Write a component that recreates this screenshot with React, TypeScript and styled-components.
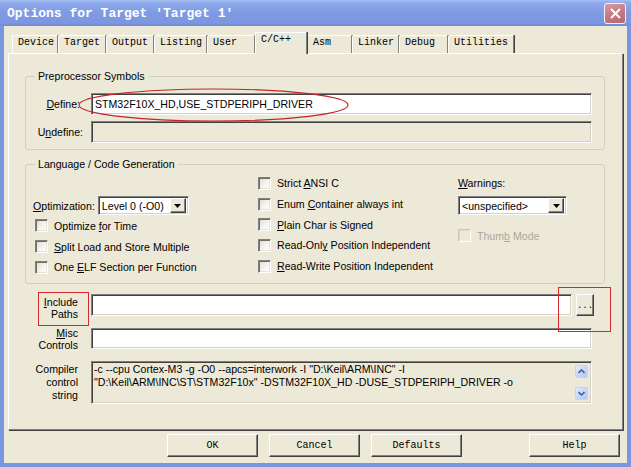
import styled, { createGlobalStyle } from "styled-components";

const UI = `"Liberation Sans", Arial, sans-serif`;
const MONO = `"Liberation Mono", "Courier New", monospace`;
const FACE = "#ECE9D8";
const RED = "#D32A2E";

const GlobalStyle = createGlobalStyle`
  html, body {
    margin: 0;
    padding: 0;
    background: #fff;
  }
  body {
    font-family: ${UI};
    font-size: 10.6px;
    color: #000;
  }
  * {
    box-sizing: border-box;
  }
`;

const Window = styled.div`
  width: 631px;
  height: 467px;
  background: #7a96df;
  display: flex;
  flex-direction: column;
  overflow: hidden;
`;

const TitleBar = styled.div`
  height: 26px;
  flex: none;
  display: flex;
  align-items: center;
  justify-content: space-between;
  padding: 0 5px 0 7px;
  background: linear-gradient(
    180deg,
    #a6bff2 0%,
    #8ea9eb 12%,
    #7e9ae2 50%,
    #7c97e0 88%,
    #6f8bd8 100%
  );
`;

const Title = styled.div`
  font-family: ${MONO};
  font-size: 13px;
  font-weight: bold;
  color: #fff;
  letter-spacing: 0;
  white-space: pre;
`;

const CloseButton = styled.div`
  width: 22px;
  height: 21px;
  border: 1px solid #f1f3fb;
  border-radius: 3px;
  background: linear-gradient(160deg, #d69aa2 0%, #c47880 55%, #b66770 100%);
  display: flex;
  align-items: center;
  justify-content: center;
`;

const Body = styled.div`
  flex: 1;
  margin: 0 4px 4px;
  background: ${FACE};
  padding: 6px 4px 0 4px;
  display: flex;
  flex-direction: column;
`;

const TabStrip = styled.div`
  height: 21px;
  flex: none;
  display: flex;
  align-items: flex-end;
  padding-left: 4px;
`;

const Tab = styled.div<{ $w: number; $active?: boolean }>`
  width: ${(p) => p.$w}px;
  height: ${(p) => (p.$active ? 22 : 18)}px;
  margin-bottom: ${(p) => (p.$active ? -1 : 0)}px;
  position: relative;
  z-index: ${(p) => (p.$active ? 1 : 0)};
  background: ${FACE};
  border-top: 1px solid #fff;
  border-left: 1px solid #fff;
  border-right: 1px solid #808080;
  border-top-left-radius: 2px;
  box-shadow: 1px 0 0 #404040;
  padding: 1px 0 0 5px;
  font-family: ${MONO};
  font-size: 10px;
  line-height: 12px;
  white-space: pre;
`;

const TabPage = styled.div`
  height: 377px;
  flex: none;
  border-top: 1px solid #fff;
  border-left: 1px solid #fff;
  border-right: 1px solid #808080;
  border-bottom: 1px solid #808080;
  box-shadow: 1px 1px 0 #404040;
  padding: 0 17px 0 16px;
  display: flex;
  flex-direction: column;
`;

const GroupBox = styled.div<{ $mt: number }>`
  position: relative;
  margin-top: ${(p) => p.$mt}px;
  border: 1px solid #d0d0bf;
  border-radius: 3px;
`;

const GroupTitle = styled.div`
  position: absolute;
  top: -7px;
  left: 9px;
  padding: 0 3px;
  background: ${FACE};
  line-height: 13px;
  white-space: nowrap;
`;

const SymbolGrid = styled.div`
  display: grid;
  grid-template-columns: 65px 501px;
  row-gap: 6px;
  align-items: center;
  padding: 16px 0 6px 0;
`;

const FieldLabel = styled.div<{ $pr?: number }>`
  text-align: right;
  padding-right: ${(p) => p.$pr ?? 9}px;
  white-space: nowrap;
`;

const sunken = `
  border: 1px solid;
  border-color: #808080 #fff #fff #808080;
  box-shadow: inset 1px 1px 0 #404040, inset -1px -1px 0 #d4d0c8;
`;

const raised = `
  border: 1px solid;
  border-color: #fff #404040 #404040 #fff;
  box-shadow: inset -1px -1px 0 #808080;
  background: ${FACE};
`;

const TextInput = styled.div<{ $h: number; $disabled?: boolean }>`
  height: ${(p) => p.$h}px;
  ${sunken}
  background: ${(p) => (p.$disabled ? FACE : "#fff")};
  padding: 0 3px;
  display: flex;
  align-items: center;
  white-space: nowrap;
  overflow: hidden;
  flex: 1;
`;

const Ellipse = styled.svg`
  position: absolute;
  left: 52px;
  top: 11px;
  pointer-events: none;
`;

const LangGrid = styled.div`
  display: grid;
  grid-template-columns: 225px 200px 1fr;
  padding: 8px 0 5px 7px;
`;

const Column = styled.div<{ $mt?: number }>`
  display: flex;
  flex-direction: column;
  margin-top: ${(p) => p.$mt ?? 0}px;
`;

const OptRow = styled.div`
  height: 20px;
  display: flex;
  align-items: center;
  gap: 3px;
`;

const CheckRow = styled.div<{ $indent?: number; $mt?: number; $disabled?: boolean }>`
  height: 20.7px;
  display: flex;
  align-items: center;
  gap: 6px;
  padding-left: ${(p) => p.$indent ?? 0}px;
  margin-top: ${(p) => p.$mt ?? 0}px;
  color: ${(p) => (p.$disabled ? "#aca899" : "#000")};
  white-space: nowrap;
`;

const CheckBox = styled.div<{ $disabled?: boolean }>`
  width: 13px;
  height: 13px;
  flex: none;
  border: 1px solid;
  border-color: ${(p) =>
    p.$disabled ? "#c9c7ba #fff #fff #c9c7ba" : "#808080 #fff #fff #808080"};
  box-shadow: ${(p) =>
    p.$disabled
      ? "inset 1px 1px 0 #dcdacb"
      : "inset 1px 1px 0 #6f6d64, inset -1px -1px 0 #e6e4da"};
  background: ${(p) =>
    p.$disabled ? FACE : "linear-gradient(135deg, #dedcd2 0%, #f4f3ee 55%, #fff 100%)"};
`;

const Select = styled.div<{ $w: number; $mt?: number }>`
  width: ${(p) => p.$w}px;
  height: 19px;
  margin-top: ${(p) => p.$mt ?? 0}px;
  ${sunken}
  background: #fff;
  display: flex;
  align-items: center;
  padding: 0 2px 0 3px;
  white-space: nowrap;
`;

const SelectText = styled.div`
  flex: 1;
`;

const SelectArrow = styled.div`
  width: 16px;
  height: 15px;
  ${raised}
  display: flex;
  align-items: center;
  justify-content: center;
`;

const PathRow = styled.div<{ $mt?: number }>`
  display: grid;
  grid-template-columns: 66px 501px;
  align-items: center;
  margin-top: ${(p) => p.$mt ?? 0}px;
`;

const MarkedLabel = styled.div`
  margin-left: 13px;
  width: 51px;
  height: 34px;
  border: 1px solid ${RED};
  display: flex;
  flex-direction: column;
  align-items: flex-end;
  justify-content: center;
  padding-right: 10px;
  line-height: 11.5px;
`;

const StackLabel = styled.div<{ $lh: number }>`
  display: flex;
  flex-direction: column;
  align-items: flex-end;
  padding-right: 13px;
  line-height: ${(p) => p.$lh}px;
`;

const InputWithButton = styled.div`
  align-self: start;
  margin-top: 2px;
  display: flex;
  gap: 4px;
  margin-right: -2px;
`;

const BrowseWrap = styled.div`
  position: relative;
`;

const BrowseButton = styled.div`
  width: 18px;
  height: 22px;
  ${raised}
  font-family: ${MONO};
  font-size: 9px;
  display: flex;
  align-items: center;
  justify-content: center;
  padding-top: 3px;
`;

const MarkBox = styled.div`
  position: absolute;
  left: -18px;
  top: -7px;
  width: 53px;
  height: 45px;
  border: 1px solid ${RED};
  pointer-events: none;
`;

const CompilerBox = styled.div`
  height: 43px;
  ${sunken}
  background: ${FACE};
  display: flex;
`;

const CompilerText = styled.div`
  flex: 1;
  padding: 1px 2px 0 2px;
  line-height: 13px;
  white-space: pre;
  overflow: hidden;
`;

const ScrollColumn = styled.div`
  width: 14px;
  margin: 3px 2px 3px 0;
  display: flex;
  flex-direction: column;
  justify-content: space-between;
`;

const ScrollButton = styled.div`
  width: 13px;
  height: 13px;
  border: 1px solid #c3d3fd;
  border-radius: 2px;
  background: linear-gradient(135deg, #e4ecfe 0%, #c8d7fb 50%, #b4c8f5 100%);
  display: flex;
  align-items: center;
  justify-content: center;
`;

const ButtonRow = styled.div`
  margin-top: 4px;
  display: flex;
  justify-content: flex-end;
  gap: 11px;
  padding-right: 3px;
`;

const DialogButton = styled.div<{ $ml?: number }>`
  width: 91px;
  height: 23px;
  ${raised}
  margin-left: ${(p) => p.$ml ?? 0}px;
  font-family: ${MONO};
  font-size: 10px;
  display: flex;
  align-items: center;
  justify-content: center;
`;

const Key = styled.span`
  text-decoration: underline;
  text-underline-offset: 1px;
`;

const tabs: { label: string; w: number; active?: boolean }[] = [
  { label: "Device", w: 46 },
  { label: "Target", w: 48 },
  { label: "Output", w: 48 },
  { label: "Listing", w: 53 },
  { label: "User", w: 48 },
  { label: "C/C++", w: 52, active: true },
  { label: "Asm", w: 45 },
  { label: "Linker", w: 47 },
  { label: "Debug", w: 49 },
  { label: "Utilities", w: 66 },
];

const DownArrow = () => (
  <svg width="7" height="4" viewBox="0 0 7 4">
    <path d="M0 0H7L3.5 4Z" fill="#000" />
  </svg>
);

const Chevron = ({ up }: { up?: boolean }) => (
  <svg width="7" height="5" viewBox="0 0 7 5">
    <path
      d={up ? "M0.5 4L3.5 1L6.5 4" : "M0.5 1L3.5 4L6.5 1"}
      fill="none"
      stroke="#4d6185"
      strokeWidth="1.6"
    />
  </svg>
);

const Check = ({
  children,
  indent,
  mt,
  disabled,
}: {
  children: React.ReactNode;
  indent?: number;
  mt?: number;
  disabled?: boolean;
}) => (
  <CheckRow $indent={indent} $mt={mt} $disabled={disabled}>
    <CheckBox $disabled={disabled} />
    <span>{children}</span>
  </CheckRow>
);

const App = () => {
  return (
    <>
      <GlobalStyle />
      <Window>
        <TitleBar>
          <Title>Options for Target 'Target 1'</Title>
          <CloseButton>
            <svg width="11" height="11" viewBox="0 0 11 11">
              <path d="M1 1L10 10M10 1L1 10" stroke="#fff" strokeWidth="2" />
            </svg>
          </CloseButton>
        </TitleBar>

        <Body>
          <TabStrip>
            {tabs.map((t) => (
              <Tab key={t.label} $w={t.w} $active={t.active}>
                {t.label}
              </Tab>
            ))}
          </TabStrip>

          <TabPage>
            <GroupBox $mt={22}>
              <GroupTitle>Preprocessor Symbols</GroupTitle>
              <SymbolGrid>
                <FieldLabel $pr={11}>
                  <Key>D</Key>efine:
                </FieldLabel>
                <TextInput $h={22}>STM32F10X_HD,USE_STDPERIPH_DRIVER</TextInput>
                <FieldLabel $pr={8}>
                  U<Key>n</Key>define:
                </FieldLabel>
                <TextInput $h={22} $disabled />
              </SymbolGrid>
              <Ellipse width="271" height="34" viewBox="0 0 271 34">
                <ellipse
                  cx="135.5"
                  cy="17"
                  rx="134.5"
                  ry="16"
                  fill="none"
                  stroke="#c4262b"
                  strokeWidth="1.2"
                />
              </Ellipse>
            </GroupBox>

            <GroupBox $mt={14}>
              <GroupTitle>Language / Code Generation</GroupTitle>
              <LangGrid>
                <Column $mt={22.5}>
                  <OptRow>
                    <span>
                      <Key>O</Key>ptimization:
                    </span>
                    <Select $w={91}>
                      <SelectText>Level 0 (-O0)</SelectText>
                      <SelectArrow>
                        <DownArrow />
                      </SelectArrow>
                    </Select>
                  </OptRow>
                  <Check indent={2}>
                    Optimize <Key>f</Key>or Time
                  </Check>
                  <Check indent={2}>
                    <Key>S</Key>plit Load and Store Multiple
                  </Check>
                  <Check indent={2}>
                    One <Key>E</Key>LF Section per Function
                  </Check>
                </Column>

                <Column>
                  <Check>
                    Strict <Key>A</Key>NSI C
                  </Check>
                  <Check>
                    Enum <Key>C</Key>ontainer always int
                  </Check>
                  <Check>
                    <Key>P</Key>lain Char is Signed
                  </Check>
                  <Check>
                    Read-Onl<Key>y</Key> Position Independent
                  </Check>
                  <Check>
                    <Key>R</Key>ead-Write Position Independent
                  </Check>
                </Column>

                <Column>
                  <CheckRow>
                    <span>
                      <Key>W</Key>arnings:
                    </span>
                  </CheckRow>
                  <Select $w={109} $mt={2.5}>
                    <SelectText>&lt;unspecified&gt;</SelectText>
                    <SelectArrow>
                      <DownArrow />
                    </SelectArrow>
                  </Select>
                  <Check mt={10} disabled>
                    Thum<Key>b</Key> Mode
                  </Check>
                </Column>
              </LangGrid>
            </GroupBox>

            <PathRow $mt={8}>
              <MarkedLabel>
                <span>
                  <Key>I</Key>nclude
                </span>
                <span>Paths</span>
              </MarkedLabel>
              <InputWithButton>
                <TextInput $h={22} />
                <BrowseWrap>
                  <BrowseButton>...</BrowseButton>
                  <MarkBox />
                </BrowseWrap>
              </InputWithButton>
            </PathRow>

            <PathRow $mt={1}>
              <StackLabel $lh={12}>
                <span>
                  <Key>M</Key>isc
                </span>
                <span>Controls</span>
              </StackLabel>
              <TextInput $h={21} />
            </PathRow>

            <PathRow $mt={10}>
              <StackLabel $lh={13}>
                <span>Compiler</span>
                <span>control</span>
                <span>string</span>
              </StackLabel>
              <CompilerBox>
                <CompilerText>
                  {`-c --cpu Cortex-M3 -g -O0 --apcs=interwork -I "D:\\Keil\\ARM\\INC" -I\n"D:\\Keil\\ARM\\INC\\ST\\STM32F10x" -DSTM32F10X_HD -DUSE_STDPERIPH_DRIVER -o`}
                </CompilerText>
                <ScrollColumn>
                  <ScrollButton>
                    <Chevron up />
                  </ScrollButton>
                  <ScrollButton>
                    <Chevron />
                  </ScrollButton>
                </ScrollColumn>
              </CompilerBox>
            </PathRow>
          </TabPage>

          <ButtonRow>
            <DialogButton>OK</DialogButton>
            <DialogButton>Cancel</DialogButton>
            <DialogButton>Defaults</DialogButton>
            <DialogButton $ml={56}>Help</DialogButton>
          </ButtonRow>
        </Body>
      </Window>
    </>
  );
};

export default App;
